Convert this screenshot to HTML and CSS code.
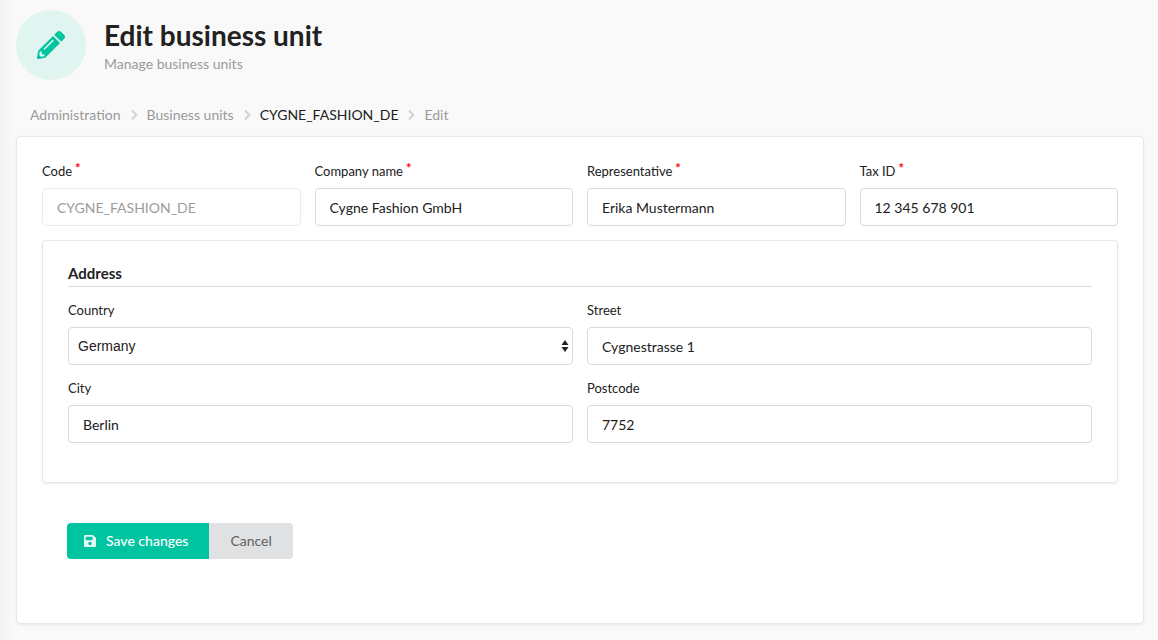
FILE: index.html
```html
<!DOCTYPE html>
<html lang="en">
<head>
<meta charset="utf-8">
<title>Edit business unit</title>
<link rel="stylesheet" href="styles.css">
</head>
<body>
<main class="page">
  <header class="page-header">
    <span class="header-icon">
      <svg viewBox="0 0 512 512" width="28" height="28" aria-hidden="true"><path fill="currentColor" d="M497.9 142.1l-46.1 46.1c-4.7 4.7-12.3 4.7-17 0l-111-111c-4.7-4.7-4.7-12.3 0-17l46.1-46.1c18.7-18.7 49.1-18.7 67.9 0l60.1 60.1c18.8 18.7 18.8 49.1 0 67.9zM284.2 99.8L21.6 362.4.4 483.9c-2.9 16.4 11.4 30.6 27.8 27.8l121.5-21.3 262.6-262.6c4.7-4.7 4.7-12.3 0-17l-111-111c-4.8-4.7-12.4-4.7-17.1 0zM124.1 339.9c-5.5-5.5-5.5-14.3 0-19.8l154-154c5.5-5.5 14.3-5.5 19.8 0s5.5 14.3 0 19.8l-154 154c-5.5 5.5-14.3 5.5-19.8 0zM88 424h48v36.3l-64.5 11.3-31.1-31.1L51.7 376H88v48z"/></svg>
    </span>
    <div>
      <h1 class="title">Edit business unit</h1>
      <p class="subtitle">Manage business units</p>
    </div>
  </header>

  <nav class="breadcrumb" aria-label="Breadcrumb">
    <a href="#">Administration</a>
    <svg class="divider" viewBox="0 0 8 12" aria-hidden="true"><path d="M2 1.5 6.3 6 2 10.5"/></svg>
    <a href="#">Business units</a>
    <svg class="divider" viewBox="0 0 8 12" aria-hidden="true"><path d="M2 1.5 6.3 6 2 10.5"/></svg>
    <a class="current" href="#">CYGNE_FASHION_DE</a>
    <svg class="divider" viewBox="0 0 8 12" aria-hidden="true"><path d="M2 1.5 6.3 6 2 10.5"/></svg>
    <span>Edit</span>
  </nav>

  <form class="segment form">
    <div class="fields four">
      <div class="field required disabled">
        <label for="code">Code</label>
        <input id="code" type="text" value="CYGNE_FASHION_DE" disabled>
      </div>
      <div class="field required">
        <label for="company">Company name</label>
        <input id="company" type="text" value="Cygne Fashion GmbH">
      </div>
      <div class="field required">
        <label for="representative">Representative</label>
        <input id="representative" type="text" value="Erika Mustermann">
      </div>
      <div class="field required">
        <label for="tax">Tax ID</label>
        <input id="tax" type="text" value="12 345 678 901">
      </div>
    </div>

    <section class="segment address">
      <h2 class="section-title">Address</h2>
      <div class="fields two">
        <div class="field">
          <label for="country">Country</label>
          <div class="select">
            <select id="country"><option>Germany</option></select>
            <svg class="arrows" viewBox="0 0 8 12" aria-hidden="true"><path d="M4 0 7.5 5h-7zM4 12 .5 7h7z"/></svg>
          </div>
        </div>
        <div class="field">
          <label for="street">Street</label>
          <input id="street" type="text" value="Cygnestrasse 1">
        </div>
        <div class="field">
          <label for="city">City</label>
          <input id="city" type="text" value="Berlin">
        </div>
        <div class="field">
          <label for="postcode">Postcode</label>
          <input id="postcode" type="text" value="7752">
        </div>
      </div>
    </section>

    <div class="buttons">
      <button class="button primary" type="submit">
        <svg class="save" viewBox="0 32 448 448" aria-hidden="true"><path fill="currentColor" d="M433.941 129.941l-83.882-83.882A48 48 0 0 0 316.118 32H48C21.49 32 0 53.49 0 80v352c0 26.51 21.49 48 48 48h352c26.51 0 48-21.49 48-48V163.882a48 48 0 0 0-14.059-33.941zM224 416c-35.346 0-64-28.654-64-64 0-35.346 28.654-64 64-64s64 28.654 64 64c0 35.346-28.654 64-64 64zm96-304.52V212c0 6.627-5.373 12-12 12H76c-6.627 0-12-5.373-12-12V108c0-6.627 5.373-12 12-12h228.52c3.183 0 6.235 1.264 8.485 3.515l3.48 3.48A11.996 11.996 0 0 1 320 111.48z"/></svg>
        Save changes
      </button>
      <button class="button" type="button">Cancel</button>
    </div>
  </form>
</main>
</body>
</html>
```
FILE: styles.css
```css
* {
  box-sizing: border-box;
}

body {
  margin: 0;
  min-height: 100vh;
  background: linear-gradient(to right, #f3f3f3, #f9f9f9 15px);
  color: #212121;
  font: 14px/20px Lato, sans-serif;
}

.page {
  padding: 10px 14px 16px 16px;
}

.page-header {
  display: flex;
  align-items: center;
  gap: 18px;
}

.header-icon {
  display: grid;
  place-items: center;
  width: 70px;
  height: 70px;
  border-radius: 50%;
  background: #e0f5ef;
  color: #00c4a0;
}

.title {
  margin: 0;
  font-size: 28px;
  line-height: 36px;
  font-weight: 700;
}

.subtitle {
  margin: 0;
  color: #9a9a9a;
  line-height: 21px;
}

.breadcrumb {
  display: flex;
  align-items: center;
  gap: 9px;
  padding: 25px 14px 11px;
  color: #9a9a9a;
}

.breadcrumb a {
  color: inherit;
  text-decoration: none;
}

.breadcrumb .current {
  color: #212121;
}

.divider {
  width: 8px;
  height: 12px;
  fill: none;
  stroke: #d2d2d2;
  stroke-width: 2;
}

.segment {
  background: #fff;
  border: 1px solid #e6e7e7;
  border-radius: 4px;
  box-shadow: 0 1px 2px rgba(34, 36, 38, 0.08);
}

.form {
  padding: 25px 25px 64px;
}

.fields {
  display: grid;
  gap: 14px;
}

.four {
  grid-template-columns: repeat(4, 1fr);
}

.two {
  grid-template-columns: repeat(2, 1fr);
}

.field label {
  display: block;
  margin-bottom: 8px;
  font-size: 13px;
  line-height: 18px;
}

.required label::after {
  content: "*";
  margin-left: 3px;
  color: #f00;
  font-weight: 700;
  vertical-align: top;
  line-height: 13px;
}

.field input,
.field select {
  display: block;
  width: 100%;
  height: 38px;
  margin: 0;
  border: 1px solid #d9dadb;
  border-radius: 4px;
  background: #fff;
  color: #212121;
  font: 14px/18px Lato, sans-serif;
}

.field input {
  padding: 0 14px;
}

.field select {
  appearance: none;
  padding: 0 24px 0 9px;
  font-family: "Liberation Sans", Arial, sans-serif;
}

.disabled input {
  border-color: #ececec;
  color: #9c9c9c;
}

.select {
  position: relative;
}

.arrows {
  position: absolute;
  top: 13px;
  right: 4px;
  width: 8px;
  height: 12px;
  fill: #212121;
  pointer-events: none;
}

.address {
  margin-top: 14px;
  padding: 22px 25px 39px;
}

.section-title {
  margin: 0 0 14px;
  padding-bottom: 3px;
  border-bottom: 1px solid #dcddde;
  font-size: 15px;
  line-height: 20px;
}

.buttons {
  display: flex;
  padding: 40px 25px 0;
}

.button {
  display: flex;
  align-items: center;
  gap: 10px;
  height: 36px;
  padding: 0 21px;
  border: 0;
  border-radius: 0 4px 4px 0;
  background: #e0e1e2;
  color: #5f6061;
  font: 14px/20px Lato, sans-serif;
}

.primary {
  padding: 0 21px 0 17px;
  border-radius: 4px 0 0 4px;
  background: #00c4a0;
  color: #fff;
  font-weight: 500;
}

.save {
  width: 12px;
  height: 12px;
  opacity: 0.9;
}
```
